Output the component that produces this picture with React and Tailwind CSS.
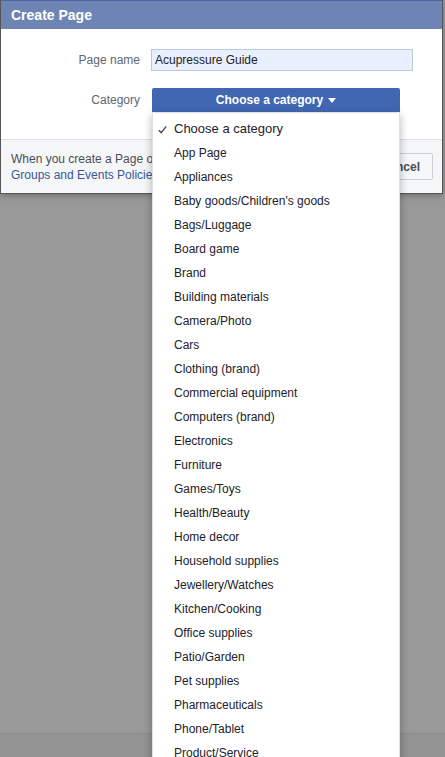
import React from "react";

const categories = [
  "App Page",
  "Appliances",
  "Baby goods/Children's goods",
  "Bags/Luggage",
  "Board game",
  "Brand",
  "Building materials",
  "Camera/Photo",
  "Cars",
  "Clothing (brand)",
  "Commercial equipment",
  "Computers (brand)",
  "Electronics",
  "Furniture",
  "Games/Toys",
  "Health/Beauty",
  "Home decor",
  "Household supplies",
  "Jewellery/Watches",
  "Kitchen/Cooking",
  "Office supplies",
  "Patio/Garden",
  "Pet supplies",
  "Pharmaceuticals",
  "Phone/Tablet",
  "Product/Service",
];

function CategoryMenu() {
  return (
    <div className="absolute left-0 top-[24px] w-[248px] bg-white border border-[rgba(0,0,0,0.12)] shadow-[0_3px_8px_rgba(0,0,0,0.3)] pt-[4px] z-10">
      <div className="relative h-[24px] flex items-center pl-[21px] text-[13px] text-[#1d2129]">
        <svg
          className="absolute left-[5px] top-[8px]"
          width="9"
          height="9"
          viewBox="0 0 9 9"
        >
          <path d="M0.8 5.2 L3.2 7.6 L8.2 1.4" fill="none" stroke="#4b4f56" strokeWidth="1.5" />
        </svg>
        Choose a category
      </div>
      {categories.map((c) => (
        <div key={c} className="h-[24px] flex items-center pl-[21px] text-[12px] text-[#1d2129]">
          {c}
        </div>
      ))}
    </div>
  );
}

export default function App() {
  return (
    <div
      className="h-[757px] overflow-hidden bg-[#999999] flex flex-col"
      style={{ fontFamily: '"Liberation Sans", Arial, sans-serif' }}
    >
      <div className="w-[443px] border border-[#555] border-t-0 bg-white shadow-[0_2px_6px_rgba(0,0,0,0.25)]">
        <div className="h-[29px] bg-[#6d84b4] border-t border-[#4c66a4] flex items-center px-[10px]">
          <span className="text-white font-bold text-[14px]">Create Page</span>
        </div>
        <div className="h-[110px] pt-[20px]">
          <div className="flex items-center h-[22px]">
            <div className="w-[139px] text-right text-[12px] text-[#606770]">Page name</div>
            <div className="ml-[11px] w-[262px] h-[22px] bg-[#e8f0fe] border border-[#bdc7d8] flex items-center px-[3px] text-[12px] text-[#1d2129]">
              Acupressure Guide
            </div>
          </div>
          <div className="flex items-center h-[24px] mt-[17px]">
            <div className="w-[139px] text-right text-[12px] text-[#606770]">Category</div>
            <div className="ml-[12px] relative">
              <div className="w-[248px] h-[24px] bg-[#4267b2] flex items-center justify-center gap-[5px] text-white font-bold text-[12px] rounded-t-[2px]">
                Choose a category
                <svg width="8" height="5" viewBox="0 0 8 5">
                  <path d="M0 0 L8 0 L4 5 Z" fill="#fff" />
                </svg>
              </div>
              <CategoryMenu />
            </div>
          </div>
        </div>
        <div className="h-[54px] bg-[#f5f6f7] border-t border-[#dddfe2] flex items-center justify-between pl-[10px] pr-[9px]">
          <div className="text-[12px] leading-[16px] text-[#4b4f56] whitespace-nowrap overflow-hidden">
            <div>When you create a Page on Facebook, you agree to the Pages,</div>
            <div className="text-[#365899]">Groups and Events Policies.</div>
          </div>
          <div className="flex gap-[4px] shrink-0">
            <div className="h-[26px] px-[12px] flex items-center bg-[#f6f7f9] border border-[#ced0d4] rounded-[2px] text-[12px] font-bold text-[#4b4f56]">
              Get Started
            </div>
            <div className="h-[27px] px-[12px] flex items-center bg-[#f6f7f9] border border-[#ced0d4] rounded-[2px] text-[12px] font-bold text-[#4b4f56]">
              Cancel
            </div>
          </div>
        </div>
      </div>
      <div className="flex-1" />
      <div className="h-[24px] bg-[#939393] border-t border-[#8c8c8c]" />
    </div>
  );
}
